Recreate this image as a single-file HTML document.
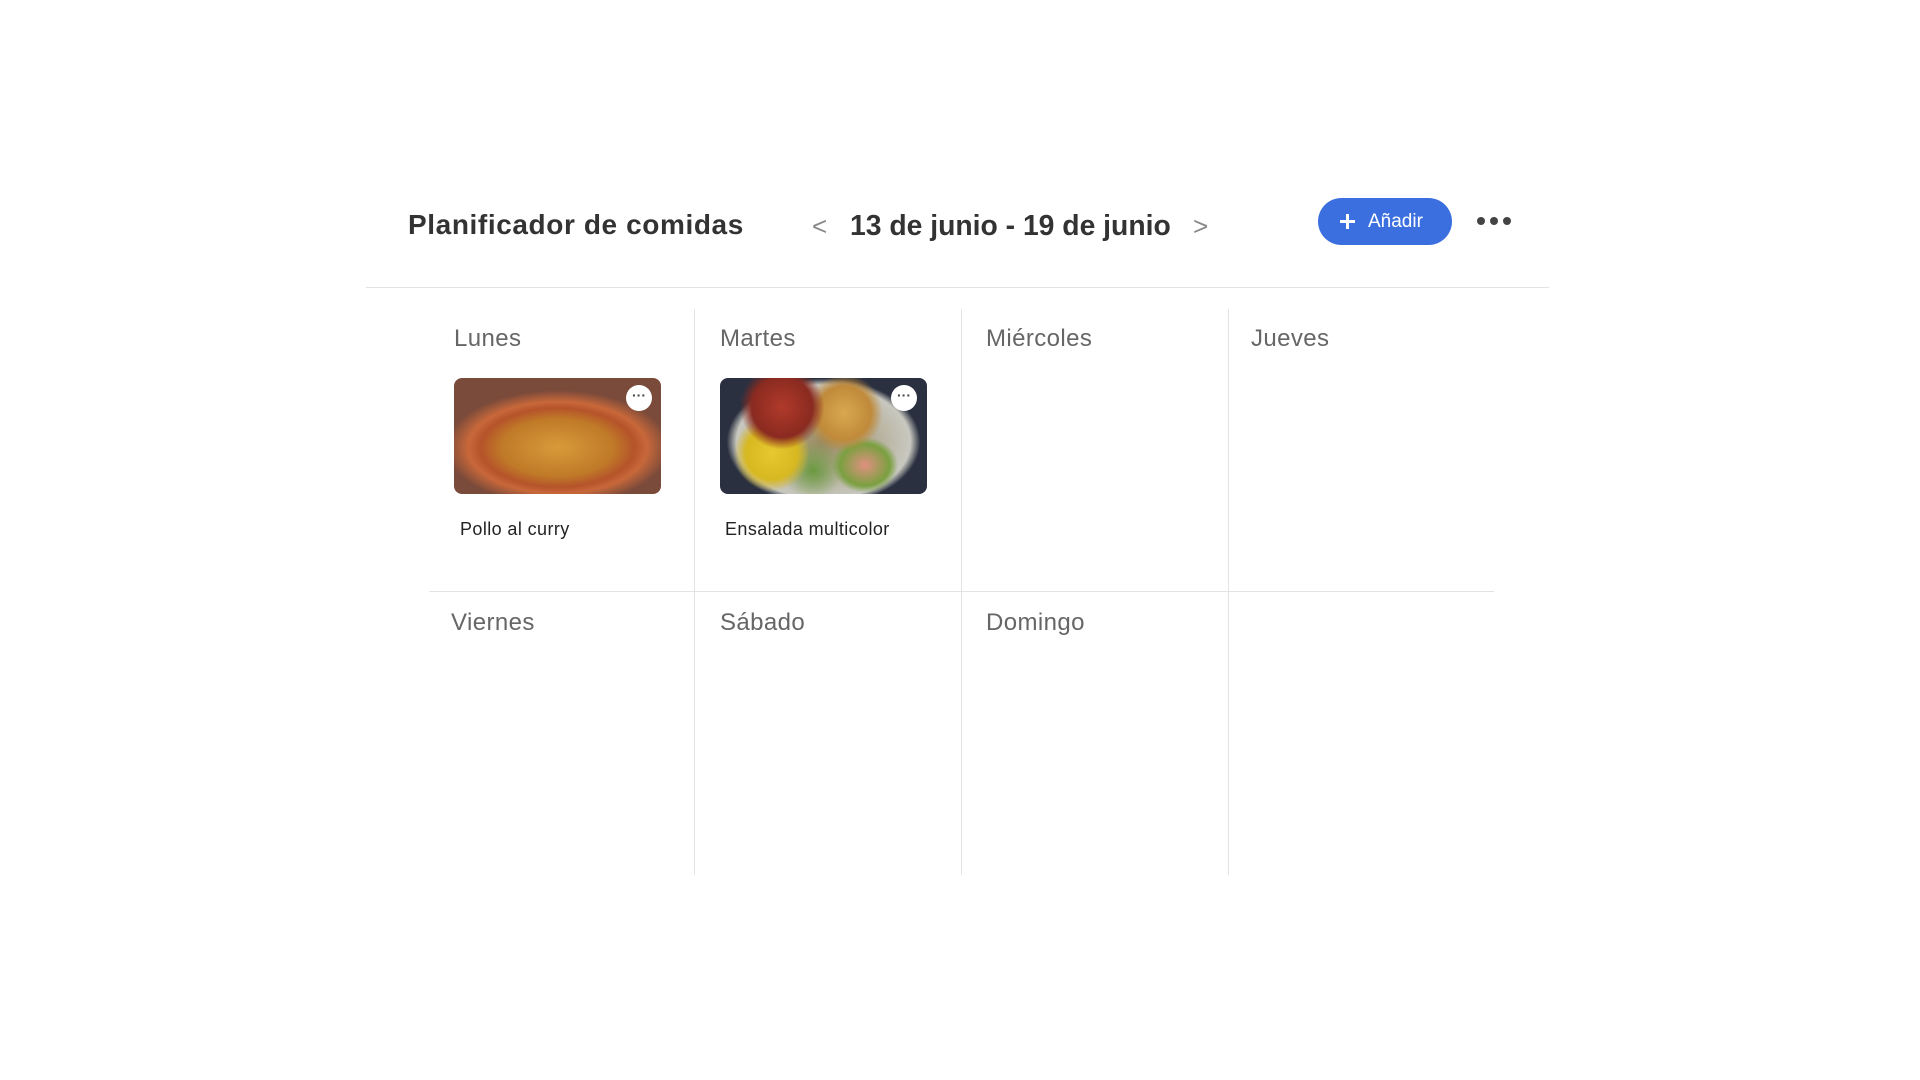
<!DOCTYPE html>
<html><head><meta charset="utf-8"><style>
*{margin:0;padding:0;box-sizing:border-box}
body{width:1920px;height:1080px;background:#fff;font-family:"Liberation Sans",sans-serif;position:relative;overflow:hidden;color:#333}
.a{position:absolute}
.title{left:408px;top:209px;font-size:28px;font-weight:bold;color:#333;letter-spacing:0.6px}
.nav{top:211px;font-size:26px;color:#888}
.date{left:850px;top:209px;font-size:28.3px;font-weight:bold;color:#333}
.btn{left:1318px;top:198px;width:134px;height:47px;border-radius:24px;background:#3b6fe0;color:#fff;font-size:19px;line-height:47px;padding-left:50px}
.btn:before{content:"";position:absolute;left:22px;top:22px;width:15px;height:2.5px;background:#fff}
.btn:after{content:"";position:absolute;left:28.3px;top:16px;width:2.5px;height:15px;background:#fff}
.dot{width:8px;height:8px;border-radius:50%;background:#444;top:217px}
.hr{left:366px;top:287px;width:1183px;height:1px;background:#e2e2e2}
.vl{width:1px;background:#e3e3e3;top:309px;height:566px}
.hl{left:429px;top:591px;width:1065px;height:1px;background:#e3e3e3}
.day{font-size:24px;color:#666;letter-spacing:0.4px}
.img{width:207px;height:116px;border-radius:8px;overflow:hidden}
.menu{width:26px;height:26px;border-radius:50%;background:#fff;font-size:14px;line-height:20px;text-align:center;color:#444;font-weight:bold}
.dish{font-size:18px;color:#222;letter-spacing:0.4px}
</style></head><body>
<div class="a title">Planificador de comidas</div>
<div class="a nav" style="left:812px">&lt;</div>
<div class="a date">13 de junio - 19 de junio</div>
<div class="a nav" style="left:1193px">&gt;</div>
<div class="a btn">Añadir</div>
<div class="a dot" style="left:1477px"></div>
<div class="a dot" style="left:1490px"></div>
<div class="a dot" style="left:1503px"></div>
<div class="a hr"></div>
<div class="a vl" style="left:694px"></div>
<div class="a vl" style="left:961px"></div>
<div class="a vl" style="left:1228px"></div>
<div class="a hl"></div>
<div class="a day" style="left:454px;top:325px">Lunes</div>
<div class="a day" style="left:720px;top:325px">Martes</div>
<div class="a day" style="left:986px;top:325px">Miércoles</div>
<div class="a day" style="left:1251px;top:325px">Jueves</div>
<div class="a day" style="left:451px;top:609px">Viernes</div>
<div class="a day" style="left:720px;top:609px">Sábado</div>
<div class="a day" style="left:986px;top:609px">Domingo</div>
<div class="a img" style="left:454px;top:378px;background:radial-gradient(ellipse 60% 55% at 50% 60%,#d89a3a 0,#c07a28 45%,#b5532a 62%,#c8683a 72%,#7a4a3a 90%),linear-gradient(#e8d8c0,#7a5040)"></div>
<div class="a menu" style="left:626px;top:385px">···</div>
<div class="a img" style="left:720px;top:378px;background:radial-gradient(circle at 30% 25%,#b03a2a 0,#8a2a20 18%,transparent 25%),radial-gradient(circle at 60% 30%,#d9a850 0,#c08a3a 18%,transparent 26%),radial-gradient(circle at 25% 65%,#e8c830 0,#d8b820 15%,transparent 22%),radial-gradient(ellipse 20% 30% at 70% 75%,#e09080 0,#7aa040 60%,transparent 80%),radial-gradient(circle at 45% 80%,#6a9a40 0,transparent 20%),radial-gradient(ellipse 60% 70% at 50% 55%,#9a8a60 0,#c8c8c0 70%,#2a3040 78%)"></div>
<div class="a menu" style="left:891px;top:385px">···</div>
<div class="a dish" style="left:460px;top:519px">Pollo al curry</div>
<div class="a dish" style="left:725px;top:519px">Ensalada multicolor</div>
</body></html>
